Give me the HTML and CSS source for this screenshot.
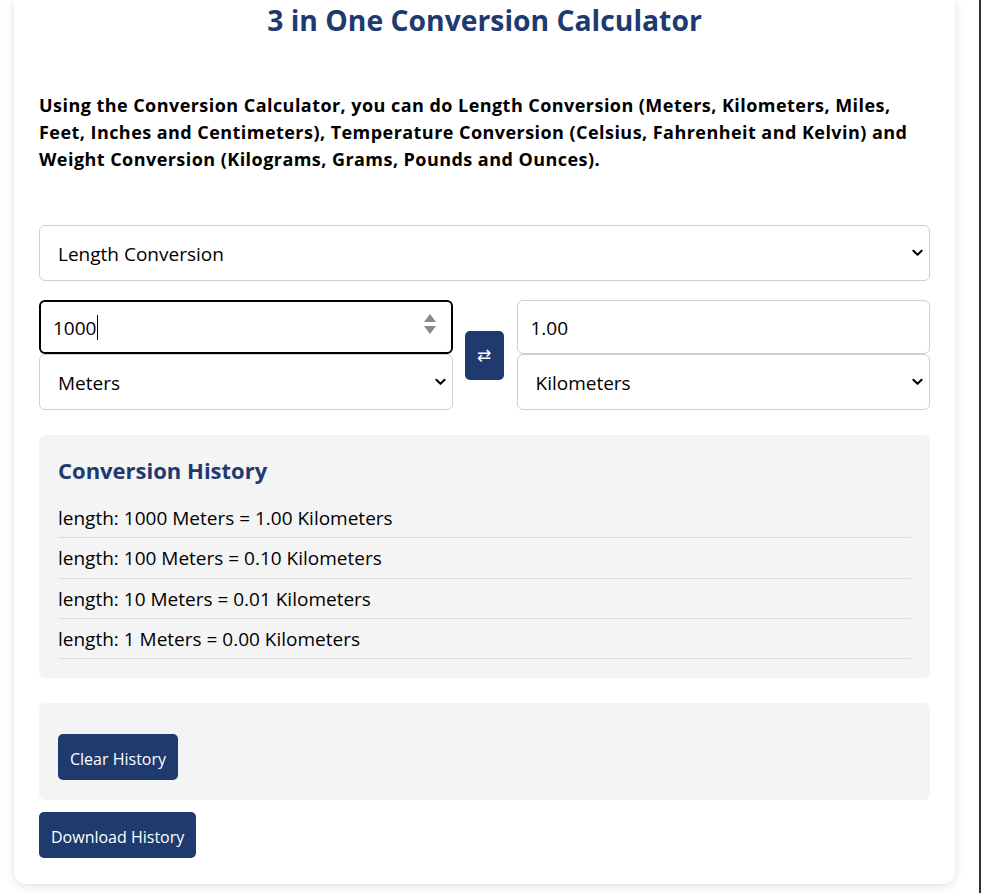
FILE: index.html
```html
<!DOCTYPE html>
<html lang="en">
<head>
<meta charset="utf-8">
<title>3 in One Conversion Calculator</title>
<link rel="stylesheet" href="styles.css">
</head>
<body>
<main class="card">
  <h1 class="title">3 in One Conversion Calculator</h1>
  <p class="intro">Using the Conversion Calculator, you can do Length Conversion (Meters, Kilometers, Miles, Feet, Inches and Centimeters), Temperature Conversion (Celsius, Fahrenheit and Kelvin) and Weight Conversion (Kilograms, Grams, Pounds and Ounces).</p>

  <select class="field select type-select">
    <option>Length Conversion</option>
    <option>Temperature Conversion</option>
    <option>Weight Conversion</option>
  </select>

  <div class="converter">
    <div class="side">
      <div class="number-wrap">
        <input class="field input input-active" type="text" value="1000">
        <span class="caret"></span>
        <span class="spinner"><span class="up"></span><span class="down"></span></span>
      </div>
      <select class="field select">
        <option>Meters</option>
        <option>Kilometers</option>
      </select>
    </div>
    <button class="swap" type="button">&#8644;</button>
    <div class="side">
      <input class="field input" type="text" value="1.00" readonly>
      <select class="field select">
        <option>Kilometers</option>
        <option>Meters</option>
      </select>
    </div>
  </div>

  <section class="history">
    <h2 class="history-title">Conversion History</h2>
    <ul class="history-list">
      <li>length: 1000 Meters = 1.00 Kilometers</li>
      <li>length: 100 Meters = 0.10 Kilometers</li>
      <li>length: 10 Meters = 0.01 Kilometers</li>
      <li>length: 1 Meters = 0.00 Kilometers</li>
    </ul>
  </section>

  <div class="actions">
    <button class="btn btn-clear" type="button">Clear History</button>
  </div>
  <button class="btn btn-download" type="button">Download History</button>
</main>
</body>
</html>
```
FILE: styles.css
```css
* { box-sizing: border-box; }

html, body { margin: 0; padding: 0; background: #fff; }

body {
  font-family: "Open Sans", "Noto Sans", Arial, sans-serif;
  color: #000;
  min-height: 100vh;
  border-right: 2px solid #2e2e2e;
  padding-left: 14px;
}

.card {
  width: 941px;
  background: #fff;
  border-radius: 0 0 12px 12px;
  box-shadow: 0 2px 10px rgba(0, 0, 0, 0.12);
  padding: 0 25px 26px;
}

.title {
  margin: 0;
  font-size: 28.3px;
  line-height: 40px;
  font-weight: 700;
  text-align: center;
  color: #1e3a6e;
}

.intro {
  margin: 52px 0 52px;
  font-size: 18px;
  line-height: 27px;
  font-weight: 700;
  letter-spacing: 0.45px;
}

.field {
  display: block;
  width: 100%;
  font-family: inherit;
  font-size: 19px;
  color: #000;
  background: #fff;
  border: 1px solid #cfcfcf;
  border-radius: 6px;
  outline: none;
}

.select {
  appearance: none;
  -webkit-appearance: none;
  height: 56px;
  padding: 2px 40px 0 18px;
  background-image: url("data:image/svg+xml;utf8,<svg xmlns='http://www.w3.org/2000/svg' width='12' height='8' viewBox='0 0 12 8'><path d='M1.5 1.5 L6 6 L10.5 1.5' fill='none' stroke='black' stroke-width='2.2' stroke-linecap='round' stroke-linejoin='round'/></svg>");
  background-repeat: no-repeat;
  background-position: right 6px center;
  background-size: 11px 8px;
}

.type-select { margin-bottom: 19px; }

.converter {
  display: flex;
  align-items: center;
  gap: 12px;
}

.side { flex: 1; min-width: 0; }

.input {
  height: 54px;
  padding: 1px 14px 0 13px;
}

.input-active {
  border: 2px solid #000;
  padding-left: 12px;
}

.number-wrap { position: relative; }

.spinner {
  position: absolute;
  right: 17px;
  top: 14px;
  display: flex;
  flex-direction: column;
  gap: 4px;
}
.spinner .up, .spinner .down {
  width: 0; height: 0;
  border-left: 6px solid transparent;
  border-right: 6px solid transparent;
}
.spinner .up { border-bottom: 8px solid #8a8a8a; }
.spinner .down { border-top: 8px solid #8a8a8a; }

.caret {
  position: absolute;
  left: 58px;
  top: 15px;
  width: 1px;
  height: 25px;
  background: #000;
}

.swap {
  flex: 0 0 39px;
  height: 49px;
  margin-right: 1px;
  border: none;
  border-radius: 5px;
  background: #1e3a6e;
  color: #fff;
  font-family: "DejaVu Sans", sans-serif;
  font-size: 17px;
  padding: 0;
  cursor: pointer;
}

.history {
  margin-top: 25px;
  background: #f4f4f4;
  border-radius: 6px;
  padding: 20px 19px 19px;
}

.history-title {
  margin: 0 0 13px;
  font-size: 22px;
  line-height: 30px;
  font-weight: 700;
  color: #1e3a6e;
}

.history-list {
  list-style: none;
  margin: 0;
  padding: 0;
}

.history-list li {
  font-size: 19px;
  line-height: 23.3px;
  padding: 9px 0 7px;
  border-bottom: 1px solid #dcdcdc;
}

.actions {
  margin-top: 25px;
  background: #f4f4f4;
  border-radius: 6px;
  padding: 31px 19px 20px;
}

.btn {
  display: block;
  height: 46px;
  padding: 3px 12px 0;
  border: none;
  border-radius: 5px;
  background: #1e3a6e;
  color: #fff;
  font-family: inherit;
  font-size: 16px;
  cursor: pointer;
}

.btn-download { margin-top: 12px; }
```
